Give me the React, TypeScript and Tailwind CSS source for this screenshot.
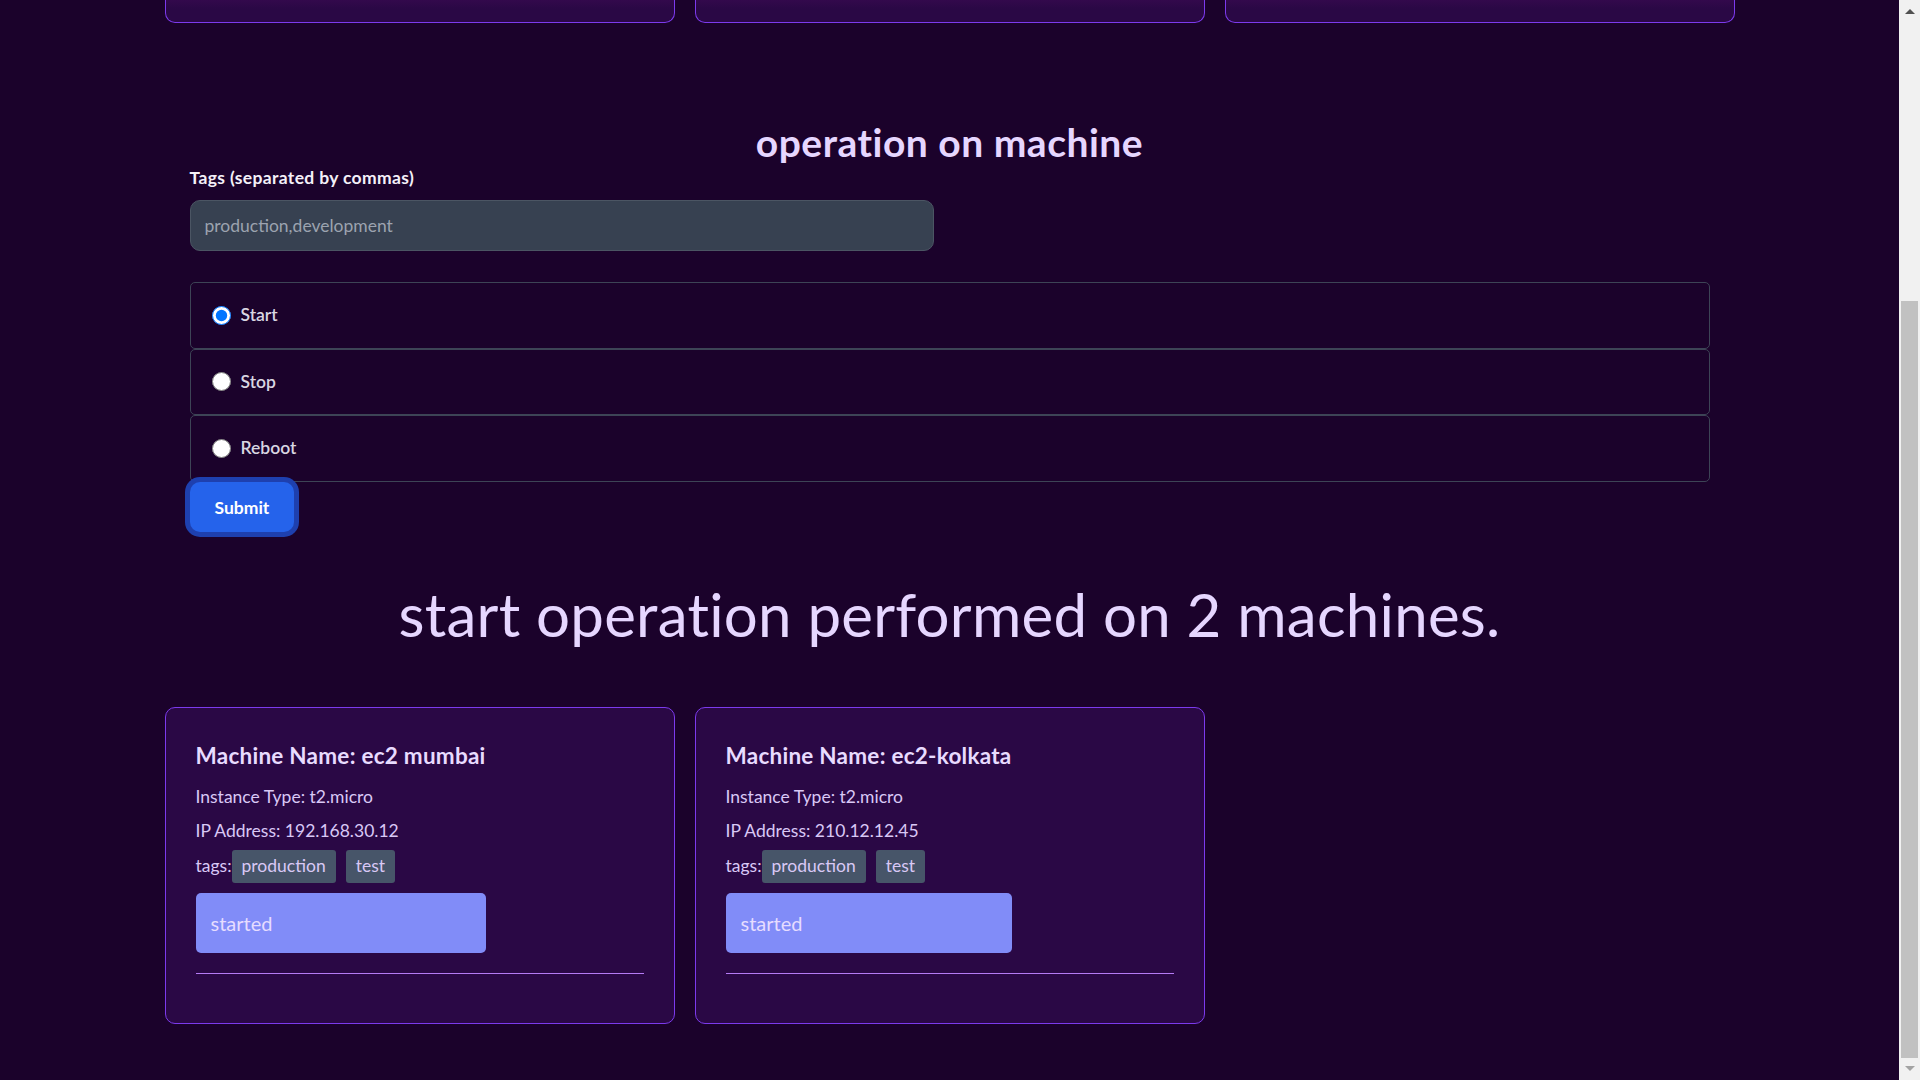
type Machine = {
  name: string;
  type: string;
  ip: string;
  tags: string[];
  status?: string;
};

const results: Machine[] = [
  { name: "ec2 mumbai", type: "t2.micro", ip: "192.168.30.12", tags: ["production", "test"], status: "started" },
  { name: "ec2-kolkata", type: "t2.micro", ip: "210.12.12.45", tags: ["production", "test"], status: "started" },
];

const operations = ["Start", "Stop", "Reboot"];

function MachineCard({ m }: { m: Machine }) {
  return (
    <div className="rounded-[10px] border border-[#7c3aed] bg-[#2a0845] p-[30px] text-[#d9c8f6]">
      <div className="w-fit">
        <h3 className="text-[22.5px] font-bold leading-[35px] tracking-[0.25px] text-[#e8dbff]">
          Machine Name: {m.name}
        </h3>
        <div className="mt-[7.5px] text-[17.5px] leading-[34.4px]">
          <p>Instance Type: {m.type}</p>
          <p>IP Address: {m.ip}</p>
          <div className="flex h-[34.4px] items-center">
            <span>tags:</span>
            {m.tags.map((t) => (
              <span key={t} className="mr-[10px] flex h-[33px] items-center rounded-[3px] bg-[#475569] px-[10px]">
                {t}
              </span>
            ))}
          </div>
        </div>
        {m.status && (
          <div className="mt-[9.5px] flex h-[60px] items-center rounded-[5px] bg-[#818cf8] px-[15px] text-[20px] text-[#e6dcff]">
            {m.status}
          </div>
        )}
      </div>
      <hr className="mt-[20px] mb-[19px] border-[#b57bf5]" />
    </div>
  );
}

function Scrollbar() {
  return (
    <div className="flex w-[21px] shrink-0 flex-col bg-[#f1f1f1]">
      <div className="flex h-[17px] justify-center pt-[9px]">
        <svg width="10" height="5" viewBox="0 0 10 5">
          <polygon points="0,5 5,0 10,5" fill="#505050" />
        </svg>
      </div>
      <div className="flex-1" />
      <div className="mx-[2px] h-[757px] bg-[#c1c1c1]" />
      <div className="flex h-[22px] justify-center pt-[8px]">
        <svg width="10" height="5" viewBox="0 0 10 5">
          <polygon points="0,0 10,0 5,5" fill="#a3a3a3" />
        </svg>
      </div>
    </div>
  );
}

export default function App() {
  return (
    <div className="flex h-screen overflow-hidden bg-[#1b022b] font-['Lato',sans-serif]">
      <main className="min-w-0 flex-1">
        <div className="mx-auto w-[1570px]">
          {/* bottom of the machine list, scrolled past */}
          <div className="grid grid-cols-3 gap-[20px]">
            {[0, 1, 2].map((i) => (
              <div
                key={i}
                className="h-[23px] rounded-b-[10px] border-x border-b border-[#7c3aed] bg-linear-to-b from-[#33094c] to-[#2a0845] to-[40%]"
              />
            ))}
          </div>

          {/* operation form */}
          <section className="mt-[97px]">
            <h2 className="text-center text-[39px] font-bold leading-[45px] tracking-[0.5px] text-[#e6d6ff]">
              operation on machine
            </h2>
            <form className="px-[25px]" onSubmit={(e) => e.preventDefault()}>
              <label className="block text-[17.5px] font-bold leading-[25px] tracking-[0.35px] text-[#f4f0f8]">
                Tags (separated by commas)
              </label>
              <input
                className="mt-[10px] h-[51px] w-[744px] rounded-[10px] border border-[#4b5563] bg-[#374151] px-[14px] text-[17.5px] text-white placeholder:text-[#9ca3af]"
                placeholder="production,development"
              />
              <div className="mt-[31px]">
                {operations.map((op, i) => (
                  <label
                    key={op}
                    className="flex h-[66.5px] items-center rounded-[5px] border border-[#3d4456] ps-[21px]"
                  >
                    <input type="radio" name="op" defaultChecked={i === 0} className="m-0 h-[19px] w-[19px]" />
                    <span className="ms-[10px] text-[17.5px] font-semibold text-[#d9d6e2]">{op}</span>
                  </label>
                ))}
              </div>
              <button className="block h-[50px] rounded-[10px] bg-[#2563eb] px-[25px] pt-[3px] text-[17.5px] font-bold text-white ring-[5px] ring-[#1e40af]">
                Submit
              </button>
            </form>
          </section>

          {/* result */}
          <h2 className="mt-[52px] text-center text-[60px] leading-[60px] tracking-[0.25px] text-[#e6d6ff]">
            start operation performed on 2 machines.
          </h2>
          <div className="mt-[63px] grid grid-cols-3 gap-[20px]">
            {results.map((m) => (
              <MachineCard key={m.name} m={m} />
            ))}
          </div>
        </div>
      </main>
      <Scrollbar />
    </div>
  );
}
